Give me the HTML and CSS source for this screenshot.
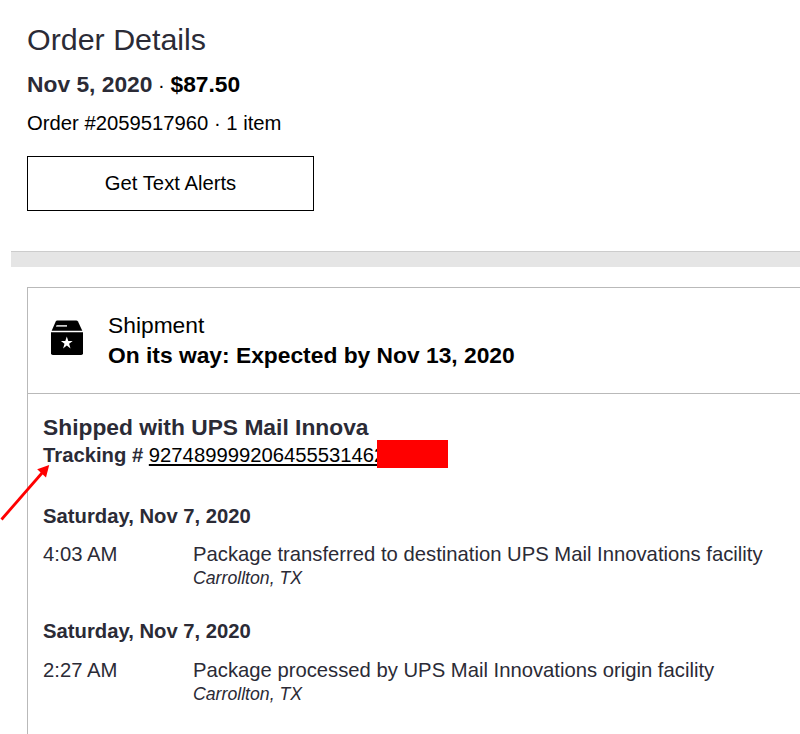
FILE: index.html
```
<!DOCTYPE html>
<html lang="en">

<head>
    <meta charset="UTF-8">
    <meta name="viewport" content="width=device-width, initial-scale=1">
    <title>Order Details</title>
    <link rel="stylesheet" href="styles.css">
</head>

<body>

    <!-- Order summary -->
    <div class="summary">
        <h1>Order Details</h1>
        <p class="order-total"><b class="order-date">Nov 5, 2020</b><span class="dot">·</span><b>$87.50</b></p>
        <p class="order-number">Order #2059517960 · 1 item</p>
        <button class="alert-button">Get Text Alerts</button>
    </div>

    <div class="divider"></div>

    <!-- Shipment card -->
    <div class="shipment">
        <div class="shipment-header">
            <svg class="box-icon" width="32" height="36" viewBox="0 0 32 36">
                <path d="M6.2 0.5H25.2Q26.4 0.5 27 1.6L31.3 10.8H0.7L4.7 1.6Q5.2 0.5 6.2 0.5Z" fill="#000" />
                <path d="M0 12.2H32V33.2Q32 35 30.2 35H1.8Q0 35 0 33.2Z" fill="#000" />
                <path d="M5.6 5H16V6.8H4.9Z" fill="#ccc" />
                <path d="M15.8 16.6L17.3 21.1H21.7L18.1 23.8L19.5 28.4L15.8 25.6L12.1 28.4L13.5 23.8L9.9 21.1H14.3Z" fill="#fff" />
            </svg>
            <div class="shipment-status">
                <p>Shipment</p>
                <p><b>On its way: Expected by Nov 13, 2020</b></p>
            </div>
        </div>

        <div class="shipment-body">
            <h2>Shipped with UPS Mail Innova</h2>
            <div class="tracking">
                <b>Tracking #</b> <a class="tracking-link">927489999206455531462</a>
                <span class="redacted"></span>
                <svg class="arrow" width="52" height="58" viewBox="0 0 52 58">
                    <path d="M1.5 56.5L42 10" stroke="#f00" stroke-width="2.8" fill="none" />
                    <path d="M49.2 2L46 14.5L37.2 6.2Z" fill="#f00" />
                </svg>
            </div>

            <div class="event">
                <h3>Saturday, Nov 7, 2020</h3>
                <div class="event-row">
                    <div class="event-time">4:03 AM</div>
                    <div>
                        <p class="event-text">Package transferred to destination UPS Mail Innovations facility</p>
                        <p class="event-place">Carrollton, TX</p>
                    </div>
                </div>
            </div>

            <div class="event">
                <h3>Saturday, Nov 7, 2020</h3>
                <div class="event-row">
                    <div class="event-time">2:27 AM</div>
                    <div>
                        <p class="event-text">Package processed by UPS Mail Innovations origin facility</p>
                        <p class="event-place">Carrollton, TX</p>
                    </div>
                </div>
            </div>
        </div>
    </div>

</body>

</html>
```
FILE: styles.css
```
* {
    box-sizing: border-box;
}

body {
    font-family: "Liberation Sans", Arial, Helvetica, sans-serif;
    font-size: 20.25px;
    line-height: 24px;
    margin: 0;
    height: 734px;
    overflow: hidden;
    display: flex;
    flex-direction: column;
    color: #000;
    background-color: #fff;
}

h1,
h2,
h3,
p {
    margin: 0;
}

/* Order summary */
.summary {
    padding: 21px 27px 40px;
}

h1 {
    font-size: 30.4px;
    font-weight: normal;
    line-height: 36px;
    color: #2b2b36;
}

.order-total {
    height: 30px;
    margin-top: 12px;
    font-size: 22.8px;
    line-height: 30px;
}

.order-date {
    color: #2b2b36;
}

.dot {
    display: inline-block;
    width: 18px;
    font-size: 20.25px;
    text-align: center;
}

.order-number {
    margin-top: 12px;
}

.alert-button {
    display: block;
    width: 287px;
    height: 55px;
    margin-top: 21px;
    padding: 0 0 2px;
    font: inherit;
    color: #000;
    background-color: #fff;
    border: 1px solid #000;
}

.divider {
    flex-shrink: 0;
    height: 16px;
    margin-left: 11px;
    background-color: #e5e5e5;
    border-top: 1px solid #ccc;
}

/* Shipment card */
.shipment {
    flex: 1;
    margin: 20px 0 0 27px;
    border-top: 1px solid #b9b9b9;
    border-left: 1px solid #b9b9b9;
}

.shipment-header {
    display: flex;
    height: 106px;
    padding: 22px 0 0 23px;
    border-bottom: 1px solid #b9b9b9;
}

.box-icon {
    margin-top: 10px;
}

.shipment-status {
    margin-left: 25px;
    font-size: 22.8px;
    line-height: 30px;
}

.shipment-body {
    padding: 19px 0 0 15px;
    color: #2b2b36;
}

h2 {
    font-size: 22.8px;
    line-height: 28px;
}

.tracking {
    position: relative;
    line-height: 28px;
}

.tracking-link {
    color: #000;
    text-decoration: underline;
}

/* Covers the end of the tracking number */
.redacted {
    position: absolute;
    left: 334px;
    top: -1px;
    width: 71px;
    height: 28px;
    background-color: #f00;
}

.arrow {
    position: absolute;
    left: -43px;
    top: 22px;
}

/* Tracking history */
.event {
    margin-top: 29px;
}

.tracking + .event {
    margin-top: 35px;
}

h3 {
    font-size: 20.25px;
    line-height: 24px;
}

.event-row {
    display: flex;
    margin-top: 14px;
}

.event + .event .event-row {
    margin-top: 15px;
}

.event-time {
    width: 150px;
}

.event-place {
    font-size: 17.7px;
    font-style: italic;
}
```
